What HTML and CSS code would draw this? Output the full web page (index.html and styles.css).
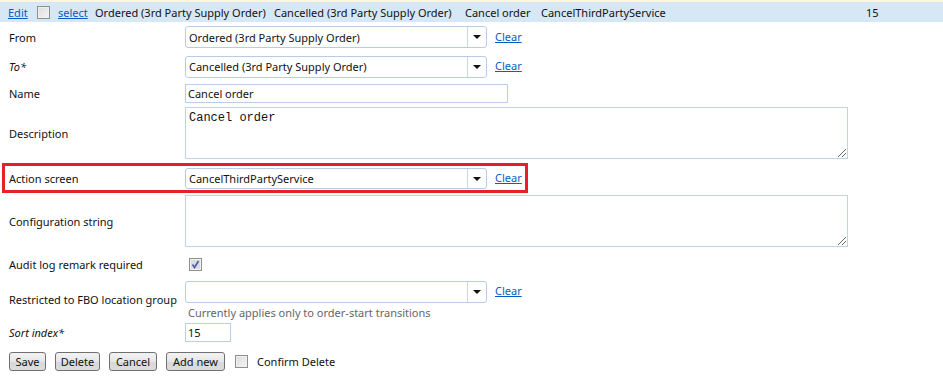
FILE: index.html
```html
<!DOCTYPE html>
<html>
<head>
<meta charset="utf-8">
<link rel="stylesheet" href="styles.css">
</head>
<body>
<div class="topstrip"></div>
<div class="bar">
  <span class="c c-edit"><a href="#">Edit</a></span>
  <span class="c c-chk"><span class="cb"></span></span>
  <span class="c c-sel"><a href="#">select</a></span>
  <span class="c c-from">Ordered (3rd Party Supply Order)</span>
  <span class="c c-to">Cancelled (3rd Party Supply Order)</span>
  <span class="c c-name">Cancel order</span>
  <span class="c c-act">CancelThirdPartyService</span>
  <span class="c c-sort">15</span>
</div>

<div class="form">
  <div class="row r-from">
    <div class="lbl">From</div>
    <div class="fld">
      <div class="sel"><span class="val">Ordered (3rd Party Supply Order)</span><span class="arr"></span></div>
      <a href="#" class="clear">Clear</a>
    </div>
  </div>
  <div class="row r-to">
    <div class="lbl"><i>To*</i></div>
    <div class="fld">
      <div class="sel"><span class="val">Cancelled (3rd Party Supply Order)</span><span class="arr"></span></div>
      <a href="#" class="clear">Clear</a>
    </div>
  </div>
  <div class="row r-name">
    <div class="lbl">Name</div>
    <div class="fld"><div class="inp inp-name">Cancel order</div></div>
  </div>
  <div class="row r-desc">
    <div class="lbl">Description</div>
    <div class="fld"><div class="ta"><span class="mono">Cancel order</span><span class="grip"></span></div></div>
  </div>
  <div class="row r-act">
    <div class="lbl">Action screen</div>
    <div class="fld">
      <div class="sel"><span class="val">CancelThirdPartyService</span><span class="arr"></span></div>
      <a href="#" class="clear">Clear</a>
    </div>
  </div>
  <div class="row r-cfg">
    <div class="lbl">Configuration string</div>
    <div class="fld"><div class="ta"><span class="grip"></span></div></div>
  </div>
  <div class="row r-audit">
    <div class="lbl">Audit log remark required</div>
    <div class="fld">
      <svg class="chk" width="13" height="13" viewBox="0 0 13 13">
        <rect x="0.5" y="0.5" width="12" height="12" fill="#e6e6e6" stroke="#8f8f8f"/>
        <rect x="1.5" y="1.5" width="10" height="10" fill="#dcdcdc" stroke="#f2f2f2"/>
        <path d="M3.5 6.5 L5.5 9.5 L9.5 3" fill="none" stroke="#4a5aa8" stroke-width="1.6"/>
      </svg>
    </div>
  </div>
  <div class="row r-restr">
    <div class="lbl">Restricted to FBO location group</div>
    <div class="fld col">
      <div class="line">
        <div class="sel"><span class="val"></span><span class="arr"></span></div>
        <a href="#" class="clear">Clear</a>
      </div>
      <div class="hint">Currently applies only to order-start transitions</div>
    </div>
  </div>
  <div class="row r-sort">
    <div class="lbl"><i>Sort index*</i></div>
    <div class="fld"><div class="inp inp-sort">15</div></div>
  </div>
  <div class="row r-btns">
    <button class="btn b-save">Save</button>
    <button class="btn b-del">Delete</button>
    <button class="btn b-can">Cancel</button>
    <button class="btn b-add">Add new</button>
    <span class="cb cb2"></span>
    <span class="confirm">Confirm Delete</span>
  </div>
</div>
</body>
</html>
```
FILE: styles.css
```css
html, body {
  margin: 0;
  padding: 0;
  background: #ffffff;
}
body {
  font-family: "Noto Sans", "Open Sans", sans-serif;
  font-size: 11px;
  color: #111;
  width: 943px;
  height: 377px;
  overflow: hidden;
}
a {
  color: #0a5bc4;
  text-decoration: underline;
}
.topstrip {
  height: 2px;
  background: #fbf6e2;
}
.bar {
  height: 20px;
  background: #d6e8f5;
  display: flex;
  align-items: center;
  padding-left: 8px;
  white-space: nowrap;
}
.c { display: inline-block; }
.c-edit { width: 29px; }
.c-chk { width: 21px; display: flex; align-items: center; }
.c-sel { width: 37px; }
.c-from { width: 179px; }
.c-to { width: 191px; }
.c-name { width: 76px; }
.c-act { width: 325px; }
.cb {
  display: inline-block;
  width: 11px;
  height: 11px;
  border: 1px solid #8e8e8e;
  background: linear-gradient(135deg, #dcdcdc, #f4f4f4);
  box-shadow: inset 0 0 0 1px #f0f0f0;
}

.row {
  display: flex;
  align-items: center;
}
.lbl {
  width: 185px;
  padding-left: 9px;
  box-sizing: border-box;
  flex: none;
  white-space: nowrap;
}
.lbl i { font-style: italic; }
.fld {
  display: flex;
  align-items: center;
}
.fld.col {
  flex-direction: column;
  align-items: flex-start;
}
.line {
  display: flex;
  align-items: center;
}
.sel {
  width: 302px;
  height: 22px;
  box-sizing: border-box;
  border: 1px solid #b7cde6;
  border-radius: 3px;
  display: flex;
  align-items: center;
  background: #fff;
}
.sel .val {
  flex: 1;
  padding-left: 3px;
  white-space: nowrap;
  overflow: hidden;
}
.sel .arr {
  width: 19px;
  height: 100%;
  border-left: 1px solid #c8d8ea;
  position: relative;
  box-sizing: border-box;
}
.sel .arr::after {
  content: "";
  position: absolute;
  left: 5px;
  top: 8px;
  border-left: 4px solid transparent;
  border-right: 4px solid transparent;
  border-top: 4px solid #111;
}
.clear {
  margin-left: 8px;
  margin-top: -2px;
}
.inp {
  height: 19px;
  box-sizing: border-box;
  border: 1px solid #b9cfe8;
  padding-left: 2px;
  display: flex;
  align-items: center;
}
.inp-name { width: 323px; }
.inp-sort { width: 46px; }
.ta {
  width: 663px;
  height: 52px;
  box-sizing: border-box;
  border: 1px solid #bfd2ea;
  position: relative;
  padding: 1px 0 0 3px;
}
.mono {
  font-family: "Liberation Mono", monospace;
  font-size: 12px;
  color: #111;
}
.grip {
  position: absolute;
  right: 1px;
  bottom: 1px;
  width: 8px;
  height: 8px;
  background: linear-gradient(135deg, transparent 45%, #666 45%, #666 52%, transparent 52%, transparent 70%, #666 70%, #666 77%, transparent 77%);
}

.r-from { height: 30px; }
.r-to { height: 29px; }
.r-name { height: 24px; }
.r-desc { height: 56px; }
.r-act {
  height: 30px;
  box-sizing: border-box;
  border: 3px solid #e42029;
  width: 526px;
  margin-left: 2px;
  margin-top: 2px;
}
.r-act .lbl { width: 180px; padding-left: 4px; }
.r-act .sel { height: 21px; }
.r-cfg { height: 56px; }
.r-audit { height: 30px; }
.r-audit .chk { margin-left: 4px; }
.r-restr { height: 41px; }
.r-restr .fld { margin-top: 1px; }
.hint {
  color: #666;
  padding-left: 3px;
  margin-top: 2px;
}
.r-sort { height: 25px; }
.r-btns {
  height: 32px;
  padding-left: 9px;
}
.btn {
  font-family: inherit;
  font-size: 11px;
  color: #111;
  height: 19px;
  box-sizing: border-box;
  border: 1px solid #707070;
  border-radius: 3px;
  background: linear-gradient(#f3f3f3, #e6e6e6 50%, #d8d8d8 51%, #dcdcdc);
  padding: 0;
  margin: 0 9px 0 0;
  line-height: 15px;
  flex: none;
}
.b-save { width: 37px; }
.b-del { width: 45px; }
.b-can { width: 48px; }
.b-add { width: 59px; margin-right: 10px; }
.cb2 { margin-left: 0; }
.confirm { margin-left: 9px; }
```
